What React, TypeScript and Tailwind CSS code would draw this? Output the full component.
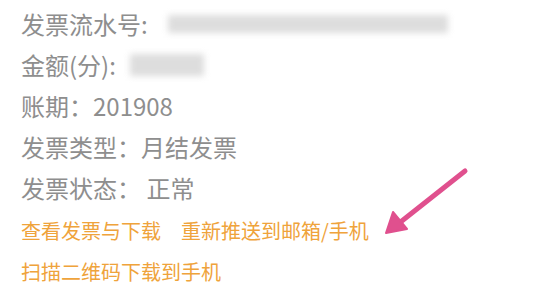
const grayRow = "flex h-[41px] items-center text-[24px] text-[#8e8e8e]";

function Blur({ w, h, ml }: { w: number; h: number; ml: number }) {
  return (
    <span
      className="inline-block bg-[#cfcfcf] blur-[3px] opacity-70"
      style={{ width: w, height: h, marginLeft: ml }}
    />
  );
}

export default function App() {
  return (
    <div
      className="relative h-[303px] w-[534px] overflow-hidden bg-white pl-[21px] pt-[3px]"
      style={{ fontFamily: '"Noto Sans CJK SC", "Noto Sans", sans-serif' }}
    >
      <div className={grayRow}>
        <span>发票流水号:</span>
        <Blur w={280} h={18} ml={20} />
      </div>
      <div className={grayRow}>
        <span>金额(分):</span>
        <Blur w={74} h={22} ml={14} />
      </div>
      <div className={grayRow}>账期：201908</div>
      <div className={grayRow}>发票类型：月结发票</div>
      <div className={grayRow}>发票状态： 正常</div>
      <div className="flex h-[43px] items-center gap-[20px] pt-[2px] text-[20px] text-[#efa33b]">
        <span>查看发票与下载</span>
        <span>重新推送到邮箱/手机</span>
      </div>
      <div className="flex h-[41px] items-center text-[20px] text-[#efa33b]">扫描二维码下载到手机</div>

      <svg
        className="absolute left-0 top-0"
        width="534"
        height="303"
        viewBox="0 0 534 303"
      >
        <line x1="465" y1="171" x2="398" y2="224" stroke="#e0508e" strokeWidth="5" strokeLinecap="round" />
        <polygon points="386,233 393,212 407,229" fill="#e0508e" stroke="#e0508e" strokeWidth="2" strokeLinejoin="round" />
      </svg>
    </div>
  );
}
